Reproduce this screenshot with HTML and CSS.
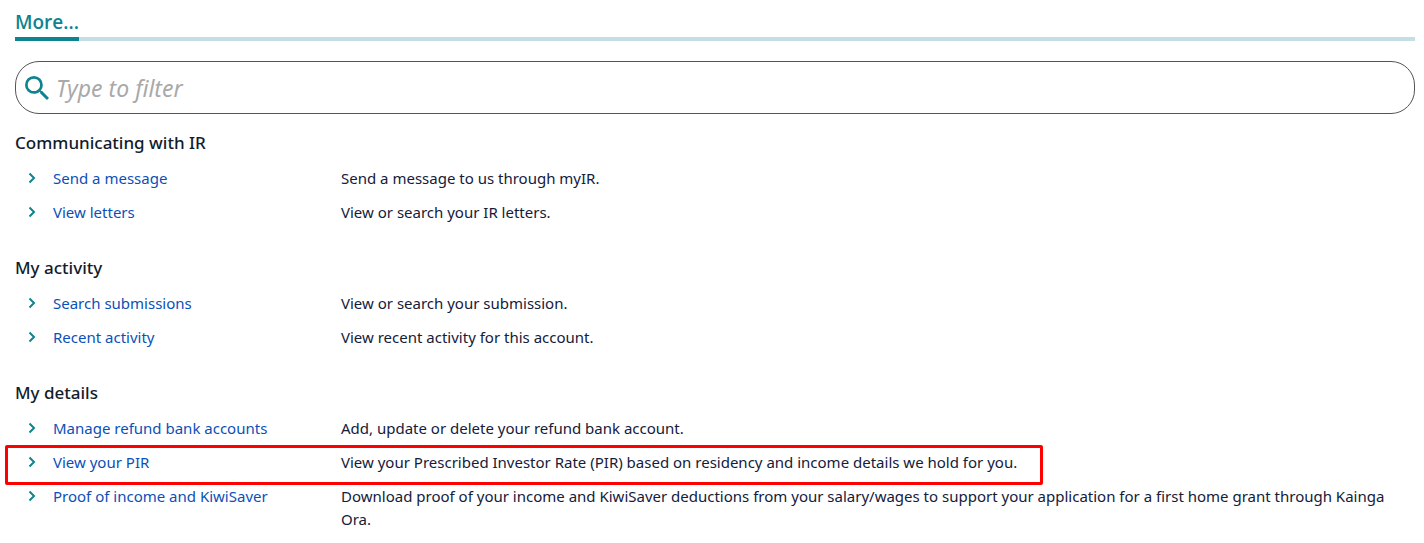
FILE: index.html
```html
<!DOCTYPE html>
<html lang="en">
<head>
<meta charset="utf-8">
<meta name="viewport" content="width=device-width, initial-scale=1">
<title>More...</title>
<link rel="stylesheet" href="styles.css">
</head>
<body>
<svg class="sprite" aria-hidden="true">
  <symbol id="chevron" viewBox="0 0 8 12"><path d="M1.500 1.500 6 6l-4.500 4.500" fill="none" stroke="currentColor" stroke-width="2"/></symbol>
</svg>
<main class="page">
  <nav class="tabs"><a class="tab" href="#more">More...</a></nav>
  <div class="filter">
    <label class="filter-label" for="filter">
      <svg class="search-icon" viewBox="3 3 17.500 17.500" role="img" aria-label="Filter"><path fill="currentColor" d="M15.500 14h-.79l-.28-.27A6.470 6.470 0 0 0 16 9.500 6.500 6.500 0 1 0 9.500 16c1.610 0 3.090-.59 4.230-1.570l.27.28v.79l5 4.990L20.490 19l-4.990-5zm-6 0C7.010 14 5 11.990 5 9.500S7.010 5 9.500 5 14 7.010 14 9.500 11.990 14 9.500 14z"/></svg>
    </label>
    <input class="filter-input" id="filter" type="text" placeholder="Type to filter">
  </div>

  <section class="group">
    <h2 class="heading">Communicating with IR</h2>
    <ul class="list">
      <li class="row"><svg class="chevron"><use href="#chevron"/></svg><a class="link" href="#message">Send a message</a><p class="description">Send a message to us through myIR.</p></li>
      <li class="row"><svg class="chevron"><use href="#chevron"/></svg><a class="link" href="#letters">View letters</a><p class="description">View or search your IR letters.</p></li>
    </ul>
  </section>

  <section class="group">
    <h2 class="heading">My activity</h2>
    <ul class="list">
      <li class="row"><svg class="chevron"><use href="#chevron"/></svg><a class="link" href="#submissions">Search submissions</a><p class="description">View or search your submission.</p></li>
      <li class="row"><svg class="chevron"><use href="#chevron"/></svg><a class="link" href="#activity">Recent activity</a><p class="description">View recent activity for this account.</p></li>
    </ul>
  </section>

  <section class="group">
    <h2 class="heading">My details</h2>
    <ul class="list">
      <li class="row"><svg class="chevron"><use href="#chevron"/></svg><a class="link" href="#accounts">Manage refund bank accounts</a><p class="description">Add, update or delete your refund bank account.</p></li>
      <li class="row highlighted"><svg class="chevron"><use href="#chevron"/></svg><a class="link" href="#pir">View your PIR</a><p class="description">View your Prescribed Investor Rate (PIR) based on residency and income details we hold for you.</p></li>
      <li class="row"><svg class="chevron"><use href="#chevron"/></svg><a class="link" href="#income">Proof of income and KiwiSaver</a><p class="description">Download proof of your income and KiwiSaver deductions from your salary/wages to support your application for a first home grant through Kainga Ora.</p></li>
    </ul>
  </section>
</main>
</body>
</html>
```
FILE: styles.css
```css
*, *::after { box-sizing: border-box; }
body {
  margin: 0;
  background: #fff;
  color: #14203a;
  font: 15px/23px "Segoe UI", "Noto Sans", "Open Sans", sans-serif;
}
.sprite { display: none; }
.page { padding: 8px 9px 0 15px; }
.tabs {
  display: flex;
  border-bottom: 4px solid #c4dfe4;
}
.tab {
  margin-bottom: -4px;
  padding-bottom: 1px;
  border-bottom: 4px solid #0f8390;
  color: #0f8390;
  font-family: "Segoe UI", "Open Sans", sans-serif;
  font-size: 19px;
  font-weight: 600;
  line-height: 28px;
  text-decoration: none;
}
.filter {
  display: flex;
  align-items: center;
  height: 53px;
  margin: 20px 0 17px;
  padding: 0 20px 0 9px;
  border: 1px solid #555;
  border-radius: 24px;
}
.filter-label { display: flex; }
.search-icon {
  width: 24px;
  height: 24px;
  color: #0f8390;
}
.filter-input {
  flex: 1;
  min-width: 0;
  padding: 0 0 0 7px;
  border: 0;
  outline: 0;
  background: transparent;
  font: italic 23px/32px "Segoe UI", "Noto Sans", "Open Sans", sans-serif;
}
.filter-input::placeholder { color: #a9a9a9; opacity: 1; }
.group { margin-bottom: 26px; }
.heading {
  margin: 0 0 7px;
  color: #111c2c;
  font-family: "Segoe UI", "Noto Sans", "Open Sans", sans-serif;
  font-size: 17px;
  font-weight: 500;
  line-height: 24px;
}
.list {
  margin: 0;
  padding: 0;
  list-style: none;
}
.row {
  position: relative;
  display: grid;
  grid-template-columns: 38px 288px 1fr;
  padding: 5px 20px 6px 0;
}
.chevron {
  width: 8px;
  height: 12px;
  margin: 5px 0 0 13px;
  color: #0f8390;
}
.link {
  justify-self: start;
  color: #0b50b8;
  text-decoration: none;
}
.description { margin: 0; }
.highlighted::after {
  content: "";
  position: absolute;
  top: -1px;
  left: -10px;
  width: 1038px;
  height: 40px;
  border: 3px solid #f00;
  border-radius: 2px;
  pointer-events: none;
}
```
